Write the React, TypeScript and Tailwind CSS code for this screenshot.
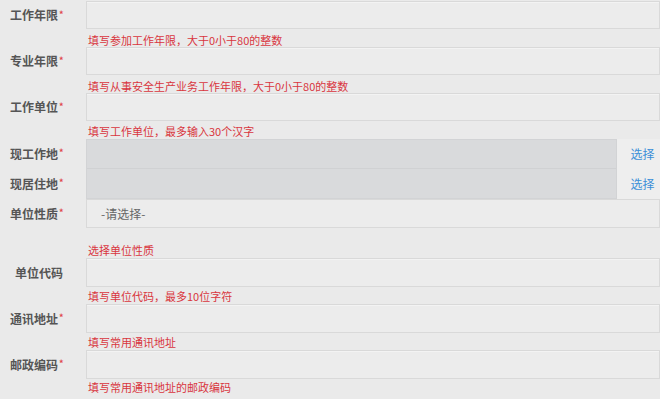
import React from "react";

const font = { fontFamily: '"Microsoft YaHei", "Noto Sans CJK SC", "Noto Sans", sans-serif' };

function Label({ text, req = true, className = "" }: { text: string; req?: boolean; className?: string }) {
  return (
    <div className={`w-[86px] shrink-0 flex items-center pl-[10px] text-[12px] font-bold text-[#555] ${className}`}>
      <span>{text}</span>
      {req && <span className="text-[9px] text-[#e0474e] self-start mt-[7px] ml-[1px]">*</span>}
    </div>
  );
}

function Hint({ text, cls }: { text: string; cls: string }) {
  return (
    <div className={`pl-[88px] text-[11px] leading-[14px] text-[#d9363e] ${cls}`}>{text}</div>
  );
}

function Input({ h }: { h: string }) {
  return <div className={`flex-1 ${h} border border-[#d9d9d9] bg-[#ececec] shadow-[inset_0_1px_0_#f3f3f3]`} />;
}

export default function App() {
  return (
    <div className="w-[660px] h-[399px] overflow-hidden bg-[#eaeaea] pt-[1px]" style={font}>
      <div className="flex h-[28px]">
        <Label text="工作年限" />
        <Input h="h-[28px]" />
      </div>
      <Hint text="填写参加工作年限，大于0小于80的整数" cls="h-[18px] pt-[4px]" />
      <div className="flex h-[28px]">
        <Label text="专业年限" />
        <Input h="h-[28px]" />
      </div>
      <Hint text="填写从事安全生产业务工作年限，大于0小于80的整数" cls="h-[18px] pt-[4px]" />
      <div className="flex h-[28px]">
        <Label text="工作单位" />
        <Input h="h-[28px]" />
      </div>
      <Hint text="填写工作单位，最多输入30个汉字" cls="h-[18px] pt-[3px]" />

      <div className="flex">
        <div className="flex flex-col">
          <Label text="现工作地" className="h-[30px]" />
          <Label text="现居住地" className="h-[30px]" />
        </div>
        <div className="flex flex-col w-[531px] bg-[#d9dadc] border border-[#d2d3d5]">
          <div className="h-[29px] border-b border-[#d0d1d3]" />
          <div className="h-[29px]" />
        </div>
        <div className="flex-1 flex flex-col bg-[#eeeeee] text-[12px] text-[#3b8fd8]">
          <div className="h-[30px] flex items-center justify-center pl-[8px]">选择</div>
          <div className="h-[30px] flex items-center justify-center pl-[8px]">选择</div>
        </div>
      </div>

      <div className="flex h-[29px]">
        <Label text="单位性质" />
        <div className="flex-1 h-[29px] border border-[#d9d9d9] bg-[#ececec] flex items-center pl-[14px] text-[12px] text-[#666]">
          -请选择-
        </div>
      </div>
      <Hint text="选择单位性质" cls="h-[30px] flex items-end pb-[1px]" />

      <div className="flex h-[29px]">
        <Label text="单位代码" req={false} className="pl-[15px]" />
        <Input h="h-[29px]" />
      </div>
      <Hint text="填写单位代码，最多10位字符" cls="h-[17px] pt-[2px]" />
      <div className="flex h-[29px]">
        <Label text="通讯地址" />
        <Input h="h-[29px]" />
      </div>
      <Hint text="填写常用通讯地址" cls="h-[17px] pt-[2px]" />
      <div className="flex h-[29px]">
        <Label text="邮政编码" />
        <Input h="h-[29px]" />
      </div>
      <Hint text="填写常用通讯地址的邮政编码" cls="h-[17px] pt-[1px]" />
    </div>
  );
}
